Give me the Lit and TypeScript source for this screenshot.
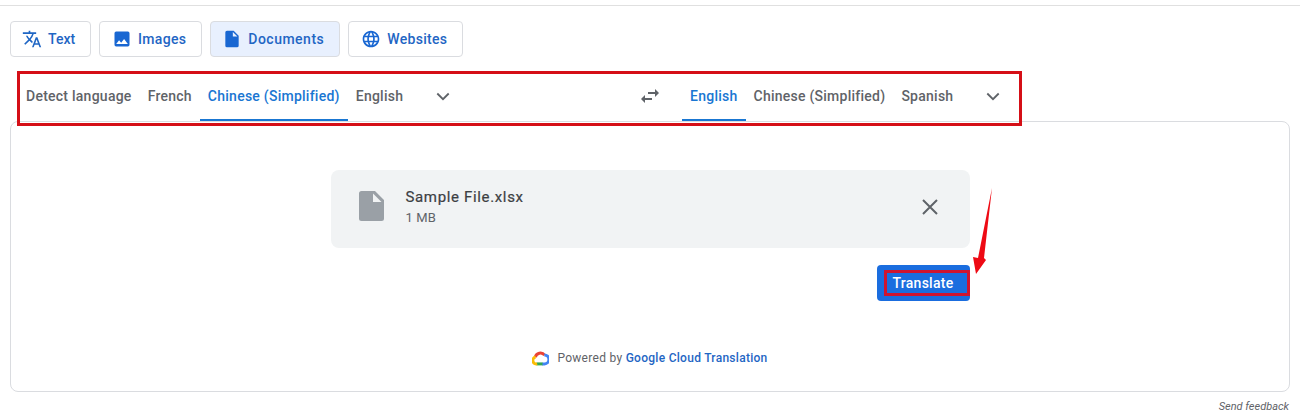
import { LitElement, html, css } from "lit";
import { customElement } from "lit/decorators.js";

const chevron = html`<svg class="chev" width="24" height="24" viewBox="0 0 24 24"><path d="M6.300 9.500 12 15.200 17.700 9.500" fill="none" stroke="#5f6368" stroke-width="1.800"/></svg>`;

@customElement("app-root")
export class AppRoot extends LitElement {
  static styles = css`
    :host { display: block; position: relative; width: 1300px; height: 414px; overflow: hidden; background: #fff; font-family: Roboto, "Liberation Sans", sans-serif; color: #5f6368; }
    .rule { height: 1px; background: #e0e0e0; margin-top: 5px; }
    .modes { display: flex; gap: 8px; padding: 15px 10px 0; }
    .mode { display: flex; align-items: center; gap: 6px; height: 36px; box-sizing: border-box; padding: 0 15px 0 12px; border: 1px solid #dadce0; border-radius: 4px; color: #1f66c4; font: 500 14px Roboto, sans-serif; letter-spacing: .3px; }
    .mode.text { padding-left: 11px; letter-spacing: 0; }
    .mode.on { background: #e8f0fe; padding-left: 11px; letter-spacing: .5px; }
    .mode svg { display: block; flex: none; }
    .langs { display: flex; align-items: stretch; height: 48px; margin: 16px 0 0 18px; width: 1004px; }
    .side { display: flex; align-items: stretch; }
    .side.left { width: 600px; }
    .tab { display: flex; align-items: center; padding: 0 8px; box-sizing: border-box; font: 500 14px Roboto, sans-serif; letter-spacing: .25px; color: #5f6368; border-bottom: 2px solid transparent; white-space: nowrap; }
    .tab.on { color: #1976d2; border-bottom-color: #1976d2; }
    .chev { align-self: center; margin: 0 0 2px 20px; }
    .swap { width: 64px; display: flex; align-items: center; justify-content: center; margin-bottom: 2px; flex: none; }
    .card { box-sizing: border-box; height: 271px; margin: 0 10px; border: 1px solid #dadce0; border-radius: 8px; display: flex; flex-direction: column; align-items: center; padding-top: 48px; }
    .column { width: 639px; display: flex; flex-direction: column; align-items: flex-end; }
    .file { align-self: stretch; box-sizing: border-box; height: 78px; background: #f1f3f4; border-radius: 8px; display: flex; align-items: center; padding: 0 28px 0 28px; }
    .doc { margin-bottom: 6px; flex: none; }
    .close { margin-bottom: 4px; flex: none; }
    .file-info { flex: 1; margin-left: 22px; padding-bottom: 4px; }
    .name { font: 400 15px/20px Roboto, sans-serif; letter-spacing: .65px; color: #3c4043; -webkit-text-stroke: .2px #3c4043; }
    .size { font: 400 13px/18px Roboto, sans-serif; color: #5f6368; margin-top: 2px; letter-spacing: .1px; }
    .go { margin-top: 17px; width: 93px; height: 36px; background: #1a6ddf; border-radius: 4px; color: #fff; display: flex; align-items: center; justify-content: center; font: 500 14px Roboto, sans-serif; letter-spacing: .25px; }
    .powered { margin-top: 49px; display: flex; align-items: center; gap: 8px; font: 400 12px/16px Roboto, sans-serif; letter-spacing: .28px; color: #5f6368; }
    .powered b { font-weight: 500; color: #1f66c4; }
    .feedback { text-align: right; padding: 8px 11px 0 0; font: italic 400 11px/14px Roboto, sans-serif; color: #5f6368; }
    .mark { position: absolute; border: 3px solid #d50f17; box-sizing: border-box; }
    .mark.bar { left: 17px; top: 71px; width: 1005px; height: 55px; }
    .mark.btn { left: 884px; top: 270px; width: 86px; height: 26px; border-color: #cf1430; }
    .arrow { position: absolute; left: 970px; top: 186px; }
  `;

  render() {
    return html`
      <div class="rule"></div>
      <div class="modes">
        <div class="mode text">
          <svg width="20" height="20" viewBox="0 0 24 24" fill="#1f66c4"><path d="M12.870 15.070l-2.540-2.510.03-.03A17.520 17.520 0 0 0 14.070 6H17V4h-7V2H8v2H1v1.990h11.170C11.500 7.920 10.440 9.750 9 11.350 8.070 10.320 7.300 9.190 6.690 8h-2c.73 1.630 1.730 3.170 2.980 4.560l-5.090 5.020L4 19l5-5 3.110 3.110.76-2.040zM18.500 10h-2L12 22h2l1.120-3h4.750L21 22h2l-4.500-12zm-2.620 7l1.620-4.330L19.120 17h-3.240z"/></svg>
          Text
        </div>
        <div class="mode">
          <svg width="20" height="20" viewBox="0 0 24 24" fill="#1967d2"><path d="M21 19V5a2 2 0 0 0-2-2H5a2 2 0 0 0-2 2v14a2 2 0 0 0 2 2h14a2 2 0 0 0 2-2zM8.500 13.500l2.500 3 3.500-4.500 4.500 6H5l3.500-4.500z"/></svg>
          Images
        </div>
        <div class="mode on">
          <svg width="20" height="20" viewBox="0 0 24 24" fill="#1967d2"><path d="M14 2H6a2 2 0 0 0-2 2v16a2 2 0 0 0 2 2h12a2 2 0 0 0 2-2V8l-6-6zm-1 7V3.500L18.500 9H13z"/></svg>
          Documents
        </div>
        <div class="mode">
          <svg width="20" height="20" viewBox="0 0 24 24" fill="#1967d2"><path d="M11.990 2C6.470 2 2 6.480 2 12s4.470 10 9.990 10C17.520 22 22 17.520 22 12S17.520 2 11.990 2zm6.930 6h-2.950a15.650 15.650 0 0 0-1.380-3.560A8.030 8.030 0 0 1 18.920 8zM12 4.040c.83 1.200 1.480 2.530 1.910 3.960h-3.820c.43-1.430 1.080-2.760 1.910-3.960zM4.260 14C4.100 13.360 4 12.690 4 12s.1-1.360.26-2h3.380c-.08.66-.14 1.320-.14 2s.06 1.340.14 2H4.260zm.82 2h2.950c.32 1.250.78 2.450 1.380 3.560A7.990 7.990 0 0 1 5.080 16zm2.950-8H5.080a7.990 7.990 0 0 1 4.330-3.560A15.650 15.650 0 0 0 8.030 8zM12 19.960c-.83-1.200-1.480-2.530-1.910-3.960h3.820c-.43 1.430-1.080 2.760-1.910 3.960zM14.340 14H9.660c-.09-.66-.16-1.320-.16-2s.07-1.350.16-2h4.680c.09.650.16 1.320.16 2s-.07 1.340-.16 2zm.25 5.560c.6-1.110 1.060-2.310 1.380-3.560h2.950a8.030 8.030 0 0 1-4.330 3.560zM16.360 14c.08-.66.14-1.320.14-2s-.06-1.340-.14-2h3.380c.16.640.26 1.310.26 2s-.1 1.360-.26 2h-3.380z"/></svg>
          Websites
        </div>
      </div>
      <div class="langs">
        <div class="side left">
          <div class="tab">Detect language</div>
          <div class="tab">French</div>
          <div class="tab on">Chinese (Simplified)</div>
          <div class="tab">English</div>
          ${chevron}
        </div>
        <div class="swap">
          <svg width="24" height="24" viewBox="0 0 24 24" fill="#5f6368"><path d="M6.990 11 3 15l3.990 4v-3H14v-2H6.990v-3zM21 9l-3.990-4v3H10v2h7.010v3L21 9z"/></svg>
        </div>
        <div class="side right">
          <div class="tab on">English</div>
          <div class="tab">Chinese (Simplified)</div>
          <div class="tab">Spanish</div>
          ${chevron}
        </div>
      </div>
      <div class="card">
        <div class="column">
          <div class="file">
            <svg class="doc" width="25" height="30" viewBox="0 0 25 30"><path d="M16 0H2.500A2.500 2.500 0 0 0 0 2.500v25A2.500 2.500 0 0 0 2.500 30h20a2.500 2.500 0 0 0 2.500-2.500V9z" fill="#9aa0a6"/><path d="M14 2.500 22.500 11H14z" fill="#f1f3f4"/></svg>
            <div class="file-info">
              <div class="name">Sample File.xlsx</div>
              <div class="size">1 MB</div>
            </div>
            <svg class="close" width="24" height="24" viewBox="0 0 24 24"><path d="M5 5l14 14m0-14L5 19" stroke="#5f6368" stroke-width="2" fill="none"/></svg>
          </div>
          <div class="go">Translate</div>
        </div>
        <div class="powered">
          <svg width="17" height="15" viewBox="0 0 17 15" fill="none" stroke-width="3">
            <path d="M3.300 6.300A5.200 5.200 0 0 1 12.600 4.200" stroke="#ea4335"/>
            <path d="M12.300 3.900A4.400 4.400 0 0 1 12.500 12.900H10" stroke="#4285f4"/>
            <path d="M4.500 12.900h6" stroke="#34a853"/>
            <path d="M5.200 12.900A3.500 3.500 0 0 1 3.600 6" stroke="#fbbc04"/>
          </svg>
          <span>Powered by <b>Google Cloud Translation</b></span>
        </div>
      </div>
      <div class="feedback">Send feedback</div>
      <div class="mark bar"></div>
      <div class="mark btn"></div>
      <svg class="arrow" width="24" height="90" viewBox="0 0 24 90"><path d="M22 2 14 72 16 74 6 88 3 71 8 72Z" fill="#ee0a14"/></svg>
    `;
  }
}
